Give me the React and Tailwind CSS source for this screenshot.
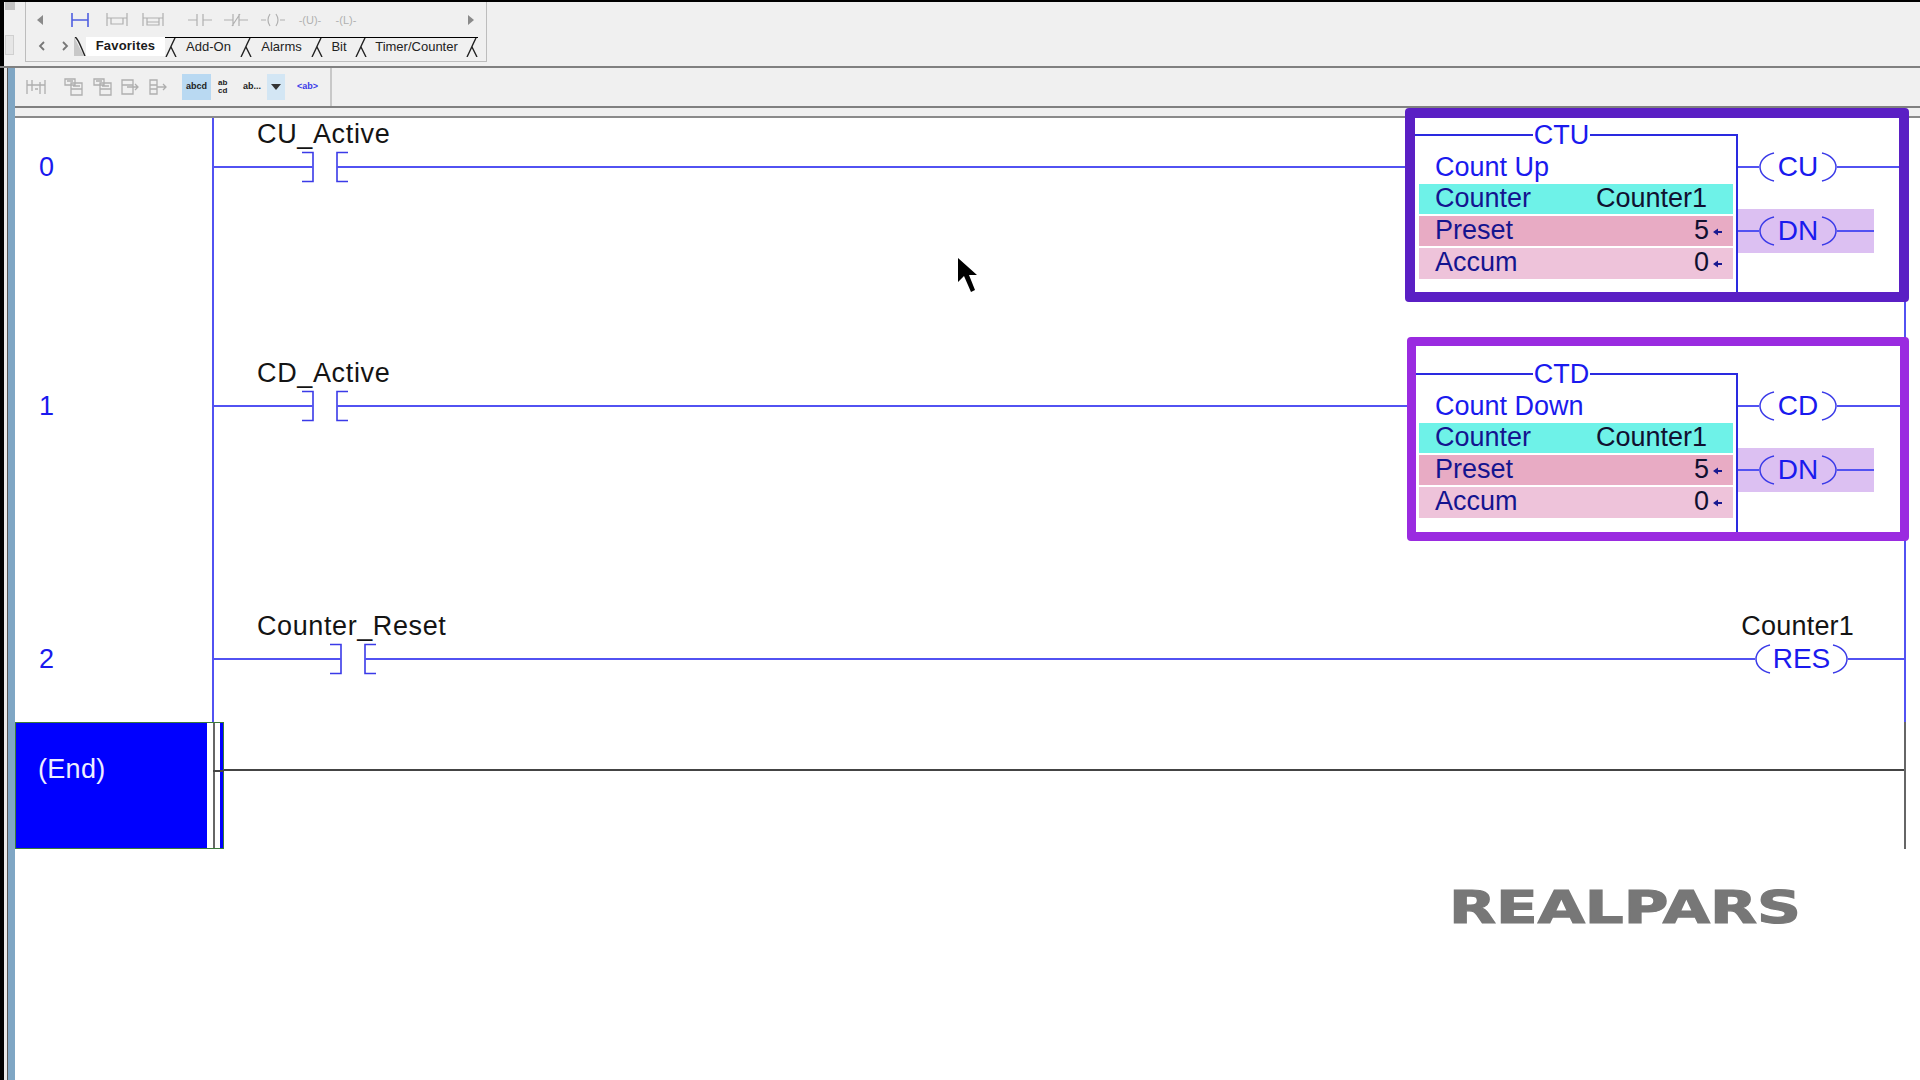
const WIRE = 'bg-[#5252f2]';

function Wire({ className = 'flex-1' }) {
  return <div className={`h-[2px] ${WIRE} ${className}`} />;
}

function Contact() {
  return (
    <svg width="46" height="32" viewBox="0 0 46 32" fill="none" stroke="#3a3ae8" strokeWidth="1.6" className="shrink-0">
      <path d="M0 1.5H11V30.5H0" />
      <path d="M0 16H11" stroke="#5252f2" strokeWidth="2" />
      <path d="M46 1.5H35V30.5H46" />
      <path d="M35 16H46" stroke="#5252f2" strokeWidth="2" />
    </svg>
  );
}

function Arc({ flip }) {
  return (
    <svg width="16" height="30" viewBox="0 0 16 30" fill="none" stroke="#3a3ae8" strokeWidth="1.5" className={`shrink-0 ${flip ? '-scale-x-100' : ''}`}>
      <path d="M15 1C6 3 1 9 1 15C1 21 6 27 15 29" />
    </svg>
  );
}

function Coil({ label, width }) {
  return (
    <div className={`flex items-center shrink-0 ${width}`}>
      <Arc />
      <span className="flex-1 text-center text-[28px] leading-[32px] text-[#1a1aee]">{label}</span>
      <Arc flip />
    </div>
  );
}

function ValueArrow() {
  return (
    <svg width="10" height="8" viewBox="0 0 10 8" className="ml-[4px] mt-[3px] shrink-0">
      <path d="M0 4L5 0.5V3H9V5H5V7.5Z" fill="#1a1a90" />
    </svg>
  );
}

function DataRow({ label, value, arrow, bg, className = '' }) {
  return (
    <div className={`flex items-center justify-between ml-[4px] w-[314px] pl-[16px] text-[27px] leading-[28px] ${bg} ${arrow ? 'pr-[10px]' : 'pr-[26px]'} ${className}`}>
      <span className="text-[#14148f]">{label}</span>
      <span className="flex items-center text-[#101030]">
        {value}
        {arrow && <ValueArrow />}
      </span>
    </div>
  );
}

// counter instruction with its output coils and the purple highlight round it
function CounterBlock({ name, title, coil, highlight }) {
  return (
    <div className="relative flex w-[489px] shrink-0 self-stretch">
      <div className={`absolute z-10 rounded-[4px] ${highlight}`} />
      <div className="w-[323px] shrink-0">
        <div className="flex items-start h-[32px] mt-px">
          <div className="w-[118px] h-[2px] mt-[15px] bg-[#2a2ae0]" />
          <span className="w-[57px] text-center text-[27px] leading-[32px] text-[#1a1aee]">{name}</span>
          <div className="flex-1 h-[17px] mt-[15px] border-t-2 border-r-2 border-[#2a2ae0]" />
        </div>
        <div className="h-[142px] border-r-2 border-[#2a2ae0]">
          <div className="h-[33px] pl-[20px] text-[27px] leading-[32px] text-[#1a1aee]">{title}</div>
          <DataRow label="Counter" value="Counter1" bg="bg-[#6ef2e8]" className="h-[30px] pb-[2px]" />
          <DataRow label="Preset" value="5" arrow bg="bg-[#e8abc4]" className="mt-[2px] h-[30px] pb-[2px]" />
          <DataRow label="Accum" value="0" arrow bg="bg-[#eec3da]" className="mt-[2px] h-[31px] pb-[3px]" />
        </div>
      </div>
      <div className="flex-1">
        <div className="flex items-center h-[32px] mt-[33px]">
          <Wire className="w-[21px]" />
          <Coil label={coil} width="w-[78px]" />
          <Wire />
        </div>
        <div className="flex items-center h-[44px] w-[136px] mt-[26px] bg-[#dcc0f2]">
          <Wire className="w-[21px]" />
          <Coil label="DN" width="w-[78px]" />
          <Wire />
        </div>
      </div>
    </div>
  );
}

function RungNumber({ n, top }) {
  return (
    <div className={`w-[197px] shrink-0 pl-[24px] text-[27px] leading-[32px] text-[#1a1aee] ${top}`}>{n}</div>
  );
}

function Rail({ className, children }) {
  return (
    <div className={`flex-1 flex border-x-2 border-[#5252f2] mr-[14px] ${className}`}>{children}</div>
  );
}

function Tag({ children, className = '' }) {
  return <span className={`text-[27px] leading-[33px] text-[#141414] ${className}`}>{children}</span>;
}

function TabSep() {
  return (
    <svg width="12" height="19" viewBox="0 0 12 19" fill="none" stroke="#222" strokeWidth="1.4" className="shrink-0">
      <path d="M10 0C7 6 4 13 1 19M6 9L11 19" />
    </svg>
  );
}

function Tab({ w, children }) {
  return <span className={`text-center text-[13px] leading-[18px] text-[#222] ${w}`}>{children}</span>;
}

function PaletteIcon({ children, className = '' }) {
  return (
    <svg width="24" height="16" viewBox="0 0 24 16" fill="none" stroke="#b0b0b0" strokeWidth="1.2" className={`shrink-0 ${className}`}>
      {children}
    </svg>
  );
}

function GreyBtn({ children, className = '' }) {
  return (
    <svg width="22" height="20" viewBox="0 0 22 20" fill="none" stroke="#aeaeae" strokeWidth="1.3" className={`shrink-0 ${className}`}>
      {children}
    </svg>
  );
}

function TopBand() {
  return (
    <div className="flex h-[68px] border-t-2 border-t-black border-b-2 border-b-[#808080] bg-[#f0f0f0]">
      <div className="w-[4px] bg-black" />
      <div className="w-[21px] pl-[1px]">
        <div className="w-[10px] h-[8px] bg-[#c4c4c4]" />
        <div className="w-[9px] h-[20px] mt-[25px] bg-[#e6e6e6] border border-[#d0d0d0]" />
      </div>
      <div className="w-[462px] h-[60px] border border-[#bdbdbd] border-t-0 pl-[11px]">
        <div className="flex items-center h-[35px] pt-[1px]">
          <svg width="6" height="10" viewBox="0 0 6 10" className="shrink-0"><path d="M6 0V10L0 5Z" fill="#8a8a8a" /></svg>
          <svg width="18" height="16" viewBox="0 0 18 16" fill="none" stroke="#4f5fe0" strokeWidth="1.6" className="ml-[28px] shrink-0">
            <path d="M1 1V15M17 1V15M1 8H17" />
          </svg>
          <PaletteIcon className="ml-[16px]"><path d="M2 1V14M22 1V14M2 6H22M6 6V12H18V6" /></PaletteIcon>
          <PaletteIcon className="ml-[12px]"><path d="M2 1V14M22 1V14M2 6H22M6 6V13H18V6M6 10H18" /></PaletteIcon>
          <PaletteIcon className="ml-[23px]"><path d="M0 8H9M9 2V14M15 2V14M15 8H24" /></PaletteIcon>
          <PaletteIcon className="ml-[12px]"><path d="M0 8H9M9 2V14M15 2V14M15 8H24M8 14L16 2" /></PaletteIcon>
          <PaletteIcon className="ml-[13px]"><path d="M0 8H5M19 8H24M9 2Q5 8 9 14M15 2Q19 8 15 14" /></PaletteIcon>
          <span className="ml-[13px] w-[24px] whitespace-nowrap text-center text-[11px] leading-none text-[#b0b0b0]">-(U)-</span>
          <span className="ml-[12px] w-[24px] whitespace-nowrap text-center text-[11px] leading-none text-[#b0b0b0]">-(L)-</span>
          <svg width="6" height="10" viewBox="0 0 6 10" className="ml-[110px] shrink-0"><path d="M0 0V10L6 5Z" fill="#8a8a8a" /></svg>
        </div>
        <div className="flex items-start h-[20px]">
          <svg width="8" height="10" viewBox="0 0 8 10" fill="none" stroke="#777" strokeWidth="1.8" className="ml-[1px] mt-[4px] shrink-0"><path d="M6 1L2 5L6 9" /></svg>
          <svg width="8" height="10" viewBox="0 0 8 10" fill="none" stroke="#777" strokeWidth="1.8" className="ml-[15px] mt-[4px] shrink-0"><path d="M2 1L6 5L2 9" /></svg>
          <svg width="12" height="19" viewBox="0 0 12 19" className="ml-[5px] shrink-0">
            <path d="M0 0L10 19H0Z" fill="#c8c8c8" />
            <path d="M1 0C4 1 6 8 11 19" fill="none" stroke="#222" strokeWidth="1.4" />
          </svg>
          <span className="w-[79px] h-[19px] bg-white text-center text-[13px] leading-[18px] font-bold tracking-[0.2px] text-[#1c1c1c]">Favorites</span>
          <div className="flex items-start border-t border-black">
            <TabSep />
            <Tab w="w-[63px]">Add-On</Tab>
            <TabSep />
            <Tab w="w-[59px]">Alarms</Tab>
            <TabSep />
            <Tab w="w-[32px]">Bit</Tab>
            <TabSep />
            <Tab w="w-[99px]">Timer/Counter</Tab>
            <TabSep />
          </div>
        </div>
      </div>
    </div>
  );
}

function SecondBar() {
  return (
    <div className="flex h-[40px] border-b-2 border-b-[#808080] bg-[#f0f0f0]">
      <div className="flex items-center w-[317px] border-r-2 border-[#c8c8c8] pl-[10px]">
        <GreyBtn><path d="M2 3V17M20 3V17M2 8H20M7 3V14M15 5V17M10 12H13" /></GreyBtn>
        <GreyBtn className="ml-[16px]"><path d="M2 2H12V8H2ZM8 6H19V12H8ZM8 12V18H19V12M4 4H10M10 9H17" /></GreyBtn>
        <GreyBtn className="ml-[7px]"><path d="M2 2H12V8H2ZM8 6H19V12H8ZM8 12V18H19V12M4 4H10M10 9H17" /></GreyBtn>
        <GreyBtn className="ml-[5px]"><path d="M3 3H14V17H3ZM3 8H14M8 10H19M16 7L19 10L16 13" /></GreyBtn>
        <GreyBtn className="ml-[6px]"><path d="M3 3H10V17H3ZM3 8H10M3 12H10M10 10H19M16 7L19 10L16 13" /></GreyBtn>
        <div className="ml-[13px] flex items-center justify-center w-[29px] h-[26px] bg-[#b9d9f2] text-[9px] font-bold text-[#222]">abcd</div>
        <div className="ml-[7px] w-[9px] text-[8px] font-bold leading-[8px] text-[#222]">ab cd</div>
        <div className="ml-[16px] w-[24px] text-[9px] font-bold text-[#222]">ab...</div>
        <div className="flex items-center justify-center w-[18px] h-[26px] bg-[#d3e6f4]">
          <svg width="10" height="6" viewBox="0 0 10 6"><path d="M0 0H10L5 6Z" fill="#333" /></svg>
        </div>
        <div className="ml-[12px] text-[9px] font-bold text-[#3a3ae8]">&lt;ab&gt;</div>
      </div>
    </div>
  );
}

function RealparsLogo() {
  return (
    <div className="pl-[1434px] mt-[41px]">
      <svg width="352" height="34" viewBox="0 0 352 34" className="overflow-visible font-['DejaVu_Sans',sans-serif]">
        <text x="0" y="33" fontSize="45" fontWeight="700" fill="#777777" stroke="#777777" strokeWidth="1.2" textLength="352" lengthAdjust="spacingAndGlyphs">REALPARS</text>
      </svg>
    </div>
  );
}

export default function App() {
  return (
    <div className="relative min-h-[1080px] bg-white overflow-hidden font-['Liberation_Sans',Arial,sans-serif]">
      <TopBand />
      <div className="flex">
        {/* window edge on the left */}
        <div className="flex w-[15px] shrink-0">
          <div className="w-[4px] bg-black" />
          <div className="w-[3px] bg-[#e8e8e8]" />
          <div className="w-[1px] bg-[#555]" />
          <div className="w-[7px] bg-[#7fa6c4]" />
        </div>

        <div className="flex-1 min-w-0 h-[1012px]">
          <SecondBar />
          <div className="h-[10px] border-b-2 border-b-[#8a8a8a] bg-[#f0f0f0]" />

          {/* rung 0 */}
          <div className="flex h-[239px]">
            <RungNumber n="0" top="pt-[33px]" />
            <Rail>
              <div className="flex-1 min-w-0">
                <div className="h-[33px] pl-[43px]"><Tag className="tracking-[0.65px]">CU_Active</Tag></div>
                <div className="flex items-center h-[32px]">
                  <Wire className="w-[88px]" />
                  <Contact />
                  <Wire />
                </div>
              </div>
              <CounterBlock
                name="CTU"
                title="Count Up"
                coil="CU"
                highlight="-left-[10px] -top-[10px] w-[504px] h-[194px] border-[10px] border-[#5a1fc4]"
              />
            </Rail>
          </div>

          {/* rung 1 */}
          <div className="flex h-[239px]">
            <RungNumber n="1" top="pt-[33px]" />
            <Rail>
              <div className="flex-1 min-w-0">
                <div className="h-[33px] pl-[43px]"><Tag className="tracking-[0.65px]">CD_Active</Tag></div>
                <div className="flex items-center h-[32px]">
                  <Wire className="w-[88px]" />
                  <Contact />
                  <Wire />
                </div>
              </div>
              <CounterBlock
                name="CTD"
                title="Count Down"
                coil="CD"
                highlight="-left-[8px] -top-[20px] w-[502px] h-[204px] border-[9px] border-[#9a2be0]"
              />
            </Rail>
          </div>

          {/* rung 2 */}
          <div className="flex h-[126px]">
            <RungNumber n="2" top="pt-[47px]" />
            <Rail className="flex-col pt-[14px]">
              <div className="flex justify-between h-[33px] pl-[43px] pr-[50px]">
                <Tag className="tracking-[0.6px]">Counter_Reset</Tag>
                <Tag className="tracking-[0.2px]">Counter1</Tag>
              </div>
              <div className="flex items-center h-[32px]">
                <Wire className="w-[116px]" />
                <Contact />
                <Wire />
                <Coil label="RES" width="w-[93px]" />
                <Wire className="w-[56px]" />
              </div>
            </Rail>
          </div>

          {/* end rung */}
          <div className="flex h-[127px]">
            <div className="relative flex w-[209px] shrink-0 border border-[#3a7a3a] bg-[#0000ff]">
              <div className="w-[191px] pl-[22px] pt-[30px] text-[27px] leading-[32px] tracking-[0.3px] text-[#eeeeff]">(End)</div>
              <div className="w-[6px] bg-white" />
              <div className="w-[2px] bg-[#666]" />
              <div className="w-[5px] bg-white" />
              <div className="absolute left-[197px] top-[47px] w-[11px] h-[2px] bg-[#444]" />
            </div>
            <div className="flex-1 mr-[14px] border-r-2 border-[#666]">
              <div className="h-[2px] mt-[47px] bg-[#444]" />
            </div>
          </div>

          <RealparsLogo />
        </div>
      </div>

      {/* mouse pointer */}
      <svg width="20" height="36" viewBox="0 0 20 36" className="absolute left-[958px] top-[258px]">
        <path d="M0 0V24L6 18L13 34L17 32L11 17H19Z" fill="#000" />
      </svg>
    </div>
  );
}
